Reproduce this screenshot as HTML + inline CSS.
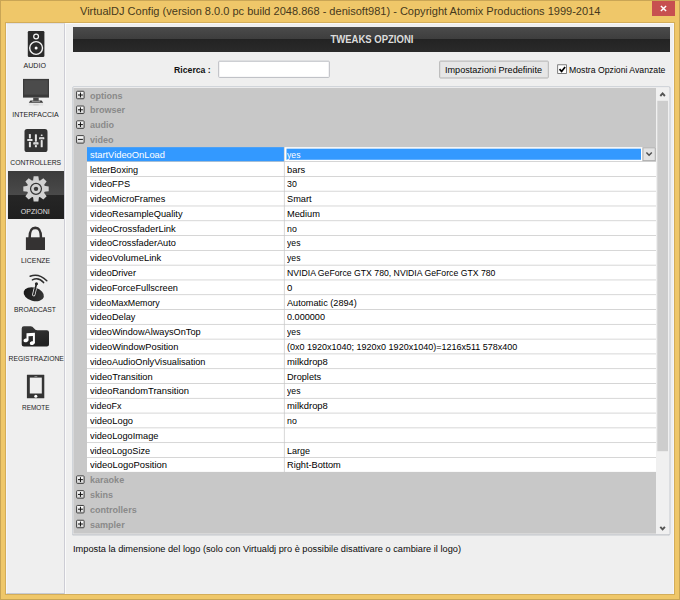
<!DOCTYPE html>
<html><head><meta charset="utf-8"><title>VirtualDJ Config</title>
<style>
html,body{margin:0;padding:0}
body{width:680px;height:600px;overflow:hidden;position:relative;background:#efc769;font-family:"Liberation Sans",sans-serif;}
.abs{position:absolute}
#win{position:absolute;left:0;top:0;width:678px;height:598px;border:1px solid #c9a555;}
#title{position:absolute;left:80px;top:2.5px;font-size:11.04px;line-height:16px;color:#46391c;white-space:pre}
#close{position:absolute;left:652px;top:1px;width:23px;height:14.5px;background:#c75050}
#client{position:absolute;left:6px;top:23px;width:668px;height:571px;background:#efefef;box-shadow:0 0 0 1px #d3ad59}
#side{position:absolute;left:6px;top:23px;width:59px;height:571px;border-top:1px solid #dfdfe6;border-left:1px solid #f6f6fa;border-right:1px solid #cdcdd5;border-bottom:1px solid #c6cad2;box-sizing:border-box;background:#efefef}
#side2{position:absolute;left:65px;top:23px;width:1px;height:571px;background:#fafafa}
#sel{position:absolute;left:8px;top:170.9px;width:55.5px;height:48.5px;background:linear-gradient(#3b3b3b 0%,#4a4a4a 49%,#262626 50%,#1f1f1f 100%)}
.lab{position:absolute;left:5.8px;width:59px;text-align:center;font-size:7.4px;line-height:9px;color:#333;white-space:pre}
.lab span{display:inline-block;transform-origin:50% 50%}
#hdr{position:absolute;left:73px;top:27px;width:597px;height:25.3px;background:linear-gradient(#4b4b4b 0%,#3e3e3e 47%,#232323 48%,#2a2a2a 100%)}
#hdrt{position:absolute;left:73px;top:27px;width:597px;text-align:center;font-weight:bold;font-size:10.3px;line-height:25px;color:#dcdcdc;white-space:pre}
#hdrt span{display:inline-block;transform:scaleX(0.924)}
.t{position:absolute;white-space:pre;transform-origin:0 50%}
#tree{position:absolute;left:74px;top:89px;width:590px;height:444px;background:#c8c8c8}
.row{position:absolute;left:0;height:14.793px;font-size:9.8px;line-height:14.2px;color:#000}
.nm{position:absolute;left:87px;width:196.5px;top:0;height:14.1px;background:#fff}
.vl{position:absolute;left:285px;width:371px;top:0;height:14.1px;background:#fff}
.dv{position:absolute;left:283.5px;width:1.5px;top:0;height:14.8px;background:#dadada}
.ln{position:absolute;left:87px;width:569px;top:14.1px;height:0.7px;background:#d4d4d4}
.tx{position:absolute;top:0;white-space:pre;transform-origin:0 50%;transform:scaleX(0.905)}
.cat{font-weight:bold;color:#8a8a8a;transform:scaleX(0.922)}
.box{position:absolute;left:76px;top:3px;width:7.5px;height:7.5px;border:1px solid #3a3a3a;background:#fff;box-sizing:content-box}
.box i{position:absolute;left:1.5px;top:3.25px;width:4.5px;height:1px;background:#000}
.box b{position:absolute;left:3.25px;top:1.5px;width:1px;height:4.5px;background:#000}
</style></head><body>
<div id="win"></div>
<div id="title">VirtualDJ Config (version 8.0.0 pc build 2048.868 - denisoft981) - Copyright Atomix Productions 1999-2014</div>
<div id="close"><svg width="23" height="15" viewBox="0 0 23 15" style="position:absolute;left:0;top:0"><path d="M8.9 5 L14.1 10 M14.1 5 L8.9 10" stroke="#fff" stroke-width="1.5" fill="none"/></svg></div>
<div id="client"></div>
<div class="abs" style="left:66px;top:23px;width:608px;height:1px;background:#f9f9f9"></div>
<div class="abs" style="left:673px;top:23px;width:1px;height:571px;background:#f6f6f9"></div>
<div id="side"></div><div id="side2"></div>
<div id="sel"></div>
<div class="lab" style="left:5.30px;top:60.74px;color:#222"><span style="transform:scaleX(0.956)">AUDIO</span></div>
<div class="lab" style="left:5.80px;top:109.58px;color:#222"><span style="transform:scaleX(0.952)">INTERFACCIA</span></div>
<div class="lab" style="left:5.75px;top:158.42px;color:#222"><span style="transform:scaleX(0.917)">CONTROLLERS</span></div>
<div class="lab" style="left:5.50px;top:207.26px;color:#e0e0e0"><span style="transform:scaleX(0.953)">OPZIONI</span></div>
<div class="lab" style="left:6.00px;top:256.10px;color:#222"><span style="transform:scaleX(0.934)">LICENZE</span></div>
<div class="lab" style="left:5.60px;top:304.94px;color:#222"><span style="transform:scaleX(0.908)">BROADCAST</span></div>
<div class="lab" style="left:6.15px;top:353.78px;color:#222"><span style="transform:scaleX(0.915)">REGISTRAZIONE</span></div>
<div class="lab" style="left:6.20px;top:402.62px;color:#222"><span style="transform:scaleX(0.872)">REMOTE</span></div>
<svg class="abs" style="left:0;top:0" width="70" height="600" viewBox="0 0 70 600">
<defs><linearGradient id="fg" x1="0" y1="0" x2="0.3" y2="1"><stop offset="0" stop-color="#383838"/><stop offset="1" stop-color="#222"/></linearGradient></defs>
<defs><linearGradient id="dg" x1="0" y1="0" x2="1" y2="0"><stop offset="0" stop-color="#181818"/><stop offset="1" stop-color="#363636"/></linearGradient></defs>
<!-- speaker -->
<rect x="27.8" y="31" width="16.6" height="26" rx="1.3" fill="#2b2b2b"/>
<circle cx="36.1" cy="36.6" r="2.4" fill="none" stroke="#f4f4f4" stroke-width="1.25"/>
<circle cx="36.1" cy="48" r="6.4" fill="none" stroke="#f4f4f4" stroke-width="1.4"/>
<circle cx="36.1" cy="48" r="1.5" fill="#fff"/>
<!-- monitor -->
<rect x="23" y="78.9" width="26" height="18.7" fill="#3a3a3a"/>
<rect x="24.2" y="80.2" width="23.6" height="14.4" fill="#4b4b4b"/>
<path d="M28.8 102.8 L30.4 100.4 L41.6 100.4 L43.2 102.8 Z" fill="#383838"/>
<rect x="33.2" y="97.6" width="5.5" height="3.5" fill="#484848"/>
<rect x="31.8" y="100.9" width="8.4" height="0.7" fill="#c4c4c4"/>
<rect x="28.9" y="103.2" width="14.2" height="2.3" fill="#dedede" opacity="0.75"/>
<rect x="33.4" y="104.4" width="5.2" height="0.9" fill="#c6c6c6"/>
<!-- controllers -->
<rect x="24.5" y="129.1" width="23" height="22.9" rx="2.6" fill="#333"/>
<g fill="#e4e4e4">
<rect x="28.9" y="133.9" width="2" height="4.5" rx="0.6"/><rect x="28.9" y="141.8" width="2" height="5.5" rx="0.6"/>
<rect x="34.9" y="134.2" width="2" height="7.5" rx="0.6"/><rect x="34.9" y="145.1" width="2" height="2.2" rx="0.6"/>
<rect x="40.7" y="134.4" width="2" height="1.7" rx="0.8"/><rect x="40.7" y="140.1" width="2" height="7.2" rx="0.6"/>
</g><g fill="#f2f2f2">
<rect x="27.3" y="139" width="5.2" height="2.1" rx="0.5"/><rect x="33.3" y="142.3" width="5.2" height="2.1" rx="0.5"/><rect x="39.1" y="137.2" width="5.2" height="2.1" rx="0.5"/>
</g><g fill="#9a9a9a">
<rect x="28.2" y="139.85" width="3.4" height="0.4"/><rect x="34.2" y="143.15" width="3.4" height="0.4"/><rect x="40" y="138.05" width="3.4" height="0.4"/>
</g>
<!-- gear -->
<g transform="translate(36 188.85)" fill="#d2d2d2">
<circle r="9.2"/>
<path d="M-3 -8 L-2.35 -12.7 L2.35 -12.7 L3 -8 Z" transform="rotate(0)"/><path d="M-3 -8 L-2.35 -12.7 L2.35 -12.7 L3 -8 Z" transform="rotate(45)"/><path d="M-3 -8 L-2.35 -12.7 L2.35 -12.7 L3 -8 Z" transform="rotate(90)"/><path d="M-3 -8 L-2.35 -12.7 L2.35 -12.7 L3 -8 Z" transform="rotate(135)"/><path d="M-3 -8 L-2.35 -12.7 L2.35 -12.7 L3 -8 Z" transform="rotate(180)"/><path d="M-3 -8 L-2.35 -12.7 L2.35 -12.7 L3 -8 Z" transform="rotate(225)"/><path d="M-3 -8 L-2.35 -12.7 L2.35 -12.7 L3 -8 Z" transform="rotate(270)"/><path d="M-3 -8 L-2.35 -12.7 L2.35 -12.7 L3 -8 Z" transform="rotate(315)"/>
<circle r="5.45" fill="none" stroke="#353535" stroke-width="1.2"/>
<circle r="2.2" fill="#3a3a3a"/>
</g>
<!-- lock -->
<rect x="25.9" y="237.3" width="19.1" height="12.7" fill="#343232"/>
<path d="M29.65 238 C29.65 230.2 31.3 227.9 35.3 227.9 C39.3 227.9 40.95 230.2 40.95 238" fill="none" stroke="#343232" stroke-width="2.6"/>
<!-- broadcast -->
<ellipse cx="33.8" cy="294.3" rx="10.4" ry="6.7" transform="rotate(15 33.8 294.3)" fill="url(#dg)"/>
<path d="M35.1 289.2 L33.75 294.7" stroke="#e6e6e6" stroke-width="3.3" stroke-linecap="round" fill="none"/>
<path d="M36.4 284 L33.8 294.6" stroke="#242424" stroke-width="1.7" stroke-linecap="round" fill="none"/>
<circle cx="36.45" cy="283.8" r="1.55" fill="#242424"/>
<path d="M30.1 276.3 Q38.5 272.6 46.8 280.8" fill="none" stroke="#2e2e2e" stroke-width="1.5" stroke-linecap="round"/>
<path d="M32.4 279.9 Q38.6 276.8 43.6 282.6" fill="none" stroke="#2e2e2e" stroke-width="1.5" stroke-linecap="round"/>
<!-- folder -->
<path d="M21.7 328.4 Q21.7 326.2 23.9 326.2 L30.6 326.2 Q32.6 326.2 33.9 328.2 Q35.2 330.2 37.2 330.2 L46.9 330.2 Q49 330.2 49 332.3 L49 344.5 Q49 346.6 46.9 346.6 L23.9 346.6 Q21.7 346.6 21.7 344.5 Z" fill="url(#fg)"/>
<g fill="#fff" stroke="none">
<ellipse cx="25.9" cy="340.4" rx="2.5" ry="1.85" transform="rotate(-15 25.9 340.4)"/><ellipse cx="32.2" cy="343.1" rx="2.5" ry="1.85" transform="rotate(-15 32.2 343.1)"/>
<path d="M26.5 340.6 L26.5 333.2 L34.9 332.8 L34.9 343.2 L32.9 343.2 L32.9 335.9 L28.5 336.2 L28.5 340.6 Z"/>
</g>
<!-- tablet -->
<rect x="26.9" y="374.7" width="17.4" height="23.6" rx="0.4" fill="#343434"/>
<rect x="29.8" y="377.6" width="12" height="15.9" fill="#efefef"/>
<circle cx="35.8" cy="396.2" r="1.55" fill="#fff"/>
<rect x="34.3" y="376.1" width="3.1" height="0.7" rx="0.3" fill="#9a9a9a"/>
</svg>
<div id="hdr"></div><div id="hdrt"><span>TWEAKS OPZIONI</span></div>
<div class="t" style="left:174.2px;top:63.2px;font-weight:bold;font-size:9.7px;line-height:13px;color:#111;transform:scaleX(0.898)">Ricerca :</div>
<svg class="abs" style="left:0;top:56px" width="680" height="26" viewBox="0 56 680 26">
<rect x="218.7" y="61.2" width="110.6" height="16.2" rx="0.8" fill="#fff" stroke="#b9bbc1" stroke-width="1"/>
<rect x="439.7" y="61.1" width="108.6" height="16.9" rx="0.8" fill="#e6e6e6" stroke="#b3b3b3" stroke-width="1"/>
<rect x="557.7" y="64.8" width="8.7" height="8.6" fill="#fff" stroke="#606060" stroke-width="0.8"/>
<path d="M559.5 69.1 L561.6 71.4 L565.1 66.9" fill="none" stroke="#000" stroke-width="1.7"/>
</svg>
<div class="t" style="left:445.4px;top:62.8px;font-size:9.9px;line-height:13px;color:#050505;transform:scaleX(0.92)">Impostazioni Predefinite</div>
<div class="t" style="left:569px;top:62.8px;font-size:9.9px;line-height:13px;color:#050505;transform:scaleX(0.88)">Mostra Opzioni Avanzate</div>
<div id="tree"></div>
<svg class="abs" style="left:0;top:0" width="680" height="600" viewBox="0 0 680 600">
<rect x="73.4" y="88" width="583" height="445.6" fill="#c8c8c8"/>
<defs><linearGradient id="bg" x1="0" y1="0" x2="0" y2="1"><stop offset="0" stop-color="#ffffff"/><stop offset="1" stop-color="#d6d6d6"/></linearGradient></defs>
<rect x="76.6" y="91.25" width="7.5" height="7.5" rx="0.8" fill="url(#bg)" stroke="#3e3e3e" stroke-width="1"/>
<rect x="78" y="94.50" width="4.9" height="1" fill="#111"/>
<rect x="79.95" y="92.55" width="1" height="4.9" fill="#111"/>
<rect x="76.6" y="106.04" width="7.5" height="7.5" rx="0.8" fill="url(#bg)" stroke="#3e3e3e" stroke-width="1"/>
<rect x="78" y="109.29" width="4.9" height="1" fill="#111"/>
<rect x="79.95" y="107.34" width="1" height="4.9" fill="#111"/>
<rect x="76.6" y="120.84" width="7.5" height="7.5" rx="0.8" fill="url(#bg)" stroke="#3e3e3e" stroke-width="1"/>
<rect x="78" y="124.09" width="4.9" height="1" fill="#111"/>
<rect x="79.95" y="122.14" width="1" height="4.9" fill="#111"/>
<rect x="76.6" y="135.63" width="7.5" height="7.5" rx="0.8" fill="url(#bg)" stroke="#3e3e3e" stroke-width="1"/>
<rect x="78" y="138.88" width="4.9" height="1" fill="#111"/>
<rect x="87" y="147.17" width="196.9" height="14.06" fill="#3399ff"/>
<rect x="284.64" y="147.17" width="371.4" height="14.06" fill="#fff"/>
<rect x="286.5" y="148.67" width="354.5" height="11.1" fill="#3399ff"/>
<rect x="642.9" y="147.77" width="12.4" height="12.9" fill="#e3e3e3" stroke="#a9a9a9" stroke-width="1"/>
<path d="M646.4 152.47 l2.7 2.7 l2.7 -2.7" fill="none" stroke="#505050" stroke-width="1.5"/>
<rect x="87" y="161.97" width="196.9" height="14.06" fill="#fff"/>
<rect x="284.64" y="161.97" width="371.4" height="14.06" fill="#fff"/>
<rect x="87" y="176.76" width="196.9" height="14.06" fill="#fff"/>
<rect x="284.64" y="176.76" width="371.4" height="14.06" fill="#fff"/>
<rect x="87" y="191.55" width="196.9" height="14.06" fill="#fff"/>
<rect x="284.64" y="191.55" width="371.4" height="14.06" fill="#fff"/>
<rect x="87" y="206.34" width="196.9" height="14.06" fill="#fff"/>
<rect x="284.64" y="206.34" width="371.4" height="14.06" fill="#fff"/>
<rect x="87" y="221.14" width="196.9" height="14.06" fill="#fff"/>
<rect x="284.64" y="221.14" width="371.4" height="14.06" fill="#fff"/>
<rect x="87" y="235.93" width="196.9" height="14.06" fill="#fff"/>
<rect x="284.64" y="235.93" width="371.4" height="14.06" fill="#fff"/>
<rect x="87" y="250.72" width="196.9" height="14.06" fill="#fff"/>
<rect x="284.64" y="250.72" width="371.4" height="14.06" fill="#fff"/>
<rect x="87" y="265.52" width="196.9" height="14.06" fill="#fff"/>
<rect x="284.64" y="265.52" width="371.4" height="14.06" fill="#fff"/>
<rect x="87" y="280.31" width="196.9" height="14.06" fill="#fff"/>
<rect x="284.64" y="280.31" width="371.4" height="14.06" fill="#fff"/>
<rect x="87" y="295.10" width="196.9" height="14.06" fill="#fff"/>
<rect x="284.64" y="295.10" width="371.4" height="14.06" fill="#fff"/>
<rect x="87" y="309.89" width="196.9" height="14.06" fill="#fff"/>
<rect x="284.64" y="309.89" width="371.4" height="14.06" fill="#fff"/>
<rect x="87" y="324.69" width="196.9" height="14.06" fill="#fff"/>
<rect x="284.64" y="324.69" width="371.4" height="14.06" fill="#fff"/>
<rect x="87" y="339.48" width="196.9" height="14.06" fill="#fff"/>
<rect x="284.64" y="339.48" width="371.4" height="14.06" fill="#fff"/>
<rect x="87" y="354.27" width="196.9" height="14.06" fill="#fff"/>
<rect x="284.64" y="354.27" width="371.4" height="14.06" fill="#fff"/>
<rect x="87" y="369.07" width="196.9" height="14.06" fill="#fff"/>
<rect x="284.64" y="369.07" width="371.4" height="14.06" fill="#fff"/>
<rect x="87" y="383.86" width="196.9" height="14.06" fill="#fff"/>
<rect x="284.64" y="383.86" width="371.4" height="14.06" fill="#fff"/>
<rect x="87" y="398.65" width="196.9" height="14.06" fill="#fff"/>
<rect x="284.64" y="398.65" width="371.4" height="14.06" fill="#fff"/>
<rect x="87" y="413.45" width="196.9" height="14.06" fill="#fff"/>
<rect x="284.64" y="413.45" width="371.4" height="14.06" fill="#fff"/>
<rect x="87" y="428.24" width="196.9" height="14.06" fill="#fff"/>
<rect x="284.64" y="428.24" width="371.4" height="14.06" fill="#fff"/>
<rect x="87" y="443.03" width="196.9" height="14.06" fill="#fff"/>
<rect x="284.64" y="443.03" width="371.4" height="14.06" fill="#fff"/>
<rect x="87" y="457.82" width="196.9" height="14.06" fill="#fff"/>
<rect x="284.64" y="457.82" width="371.4" height="14.06" fill="#fff"/>
<rect x="76.6" y="475.87" width="7.5" height="7.5" rx="0.8" fill="url(#bg)" stroke="#3e3e3e" stroke-width="1"/>
<rect x="78" y="479.12" width="4.9" height="1" fill="#111"/>
<rect x="79.95" y="477.17" width="1" height="4.9" fill="#111"/>
<rect x="76.6" y="490.66" width="7.5" height="7.5" rx="0.8" fill="url(#bg)" stroke="#3e3e3e" stroke-width="1"/>
<rect x="78" y="493.91" width="4.9" height="1" fill="#111"/>
<rect x="79.95" y="491.96" width="1" height="4.9" fill="#111"/>
<rect x="76.6" y="505.45" width="7.5" height="7.5" rx="0.8" fill="url(#bg)" stroke="#3e3e3e" stroke-width="1"/>
<rect x="78" y="508.70" width="4.9" height="1" fill="#111"/>
<rect x="79.95" y="506.75" width="1" height="4.9" fill="#111"/>
<rect x="76.6" y="520.25" width="7.5" height="7.5" rx="0.8" fill="url(#bg)" stroke="#3e3e3e" stroke-width="1"/>
<rect x="78" y="523.50" width="4.9" height="1" fill="#111"/>
<rect x="79.95" y="521.55" width="1" height="4.9" fill="#111"/>
<path d="M72.6 534.9 V88 Q72.6 86.6 74 86.6 H668.6" fill="none" stroke="#ced2d8" stroke-width="1"/>
<path d="M668.6 86.6 Q670 86.6 670 88 V533.6 Q670 534.9 668.7 534.9" fill="none" stroke="#c6cad0" stroke-width="1"/><path d="M669.4 534.9 H72.6" fill="none" stroke="#b8bcc3" stroke-width="1"/>
</svg>
<div class="row" style="top:88.70px"><span class="tx cat" style="left:89.6px">options</span></div>
<div class="row" style="top:102.70px"><span class="tx cat" style="left:89.6px">browser</span></div>
<div class="row" style="top:117.70px"><span class="tx cat" style="left:89.6px">audio</span></div>
<div class="row" style="top:132.70px"><span class="tx cat" style="left:89.6px">video</span></div>
<div class="row" style="top:147.70px"><span class="tx" style="left:89.6px;color:#fff;transform:scaleX(0.951)">startVideoOnLoad</span><span class="tx" style="left:287.2px;color:#fff;transform:scaleX(0.882)">yes</span></div>
<div class="row" style="top:162.70px"><span class="tx" style="left:89.6px;transform:scaleX(0.931)">letterBoxing</span><span class="tx" style="left:287.2px;transform:scaleX(0.953)">bars</span></div>
<div class="row" style="top:176.70px"><span class="tx" style="left:89.6px;transform:scaleX(0.944)">videoFPS</span><span class="tx" style="left:287.2px;transform:scaleX(0.896)">30</span></div>
<div class="row" style="top:191.70px"><span class="tx" style="left:89.6px;transform:scaleX(0.934)">videoMicroFrames</span><span class="tx" style="left:287.2px;transform:scaleX(0.939)">Smart</span></div>
<div class="row" style="top:206.70px"><span class="tx" style="left:89.6px;transform:scaleX(0.944)">videoResampleQuality</span><span class="tx" style="left:287.2px;transform:scaleX(0.946)">Medium</span></div>
<div class="row" style="top:221.70px"><span class="tx" style="left:89.6px;transform:scaleX(0.959)">videoCrossfaderLink</span><span class="tx" style="left:287.2px;transform:scaleX(0.896)">no</span></div>
<div class="row" style="top:235.70px"><span class="tx" style="left:89.6px;transform:scaleX(0.939)">videoCrossfaderAuto</span><span class="tx" style="left:287.2px;transform:scaleX(0.882)">yes</span></div>
<div class="row" style="top:250.70px"><span class="tx" style="left:89.6px;transform:scaleX(0.961)">videoVolumeLink</span><span class="tx" style="left:287.2px;transform:scaleX(0.882)">yes</span></div>
<div class="row" style="top:265.70px"><span class="tx" style="left:89.6px;transform:scaleX(0.927)">videoDriver</span><span class="tx" style="left:287.2px;transform:scaleX(0.886)">NVIDIA GeForce GTX 780, NVIDIA GeForce GTX 780</span></div>
<div class="row" style="top:280.70px"><span class="tx" style="left:89.6px;transform:scaleX(0.938)">videoForceFullscreen</span><span class="tx" style="left:287.2px;transform:scaleX(0.980)">0</span></div>
<div class="row" style="top:295.70px"><span class="tx" style="left:89.6px;transform:scaleX(0.902)">videoMaxMemory</span><span class="tx" style="left:287.2px;transform:scaleX(0.935)">Automatic (2894)</span></div>
<div class="row" style="top:309.70px"><span class="tx" style="left:89.6px;transform:scaleX(0.936)">videoDelay</span><span class="tx" style="left:287.2px;transform:scaleX(0.930)">0.000000</span></div>
<div class="row" style="top:324.70px"><span class="tx" style="left:89.6px;transform:scaleX(0.936)">videoWindowAlwaysOnTop</span><span class="tx" style="left:287.2px;transform:scaleX(0.882)">yes</span></div>
<div class="row" style="top:339.70px"><span class="tx" style="left:89.6px;transform:scaleX(0.949)">videoWindowPosition</span><span class="tx" style="left:287.2px;transform:scaleX(0.919)">(0x0 1920x1040; 1920x0 1920x1040)=1216x511 578x400</span></div>
<div class="row" style="top:354.70px"><span class="tx" style="left:89.6px;transform:scaleX(0.935)">videoAudioOnlyVisualisation</span><span class="tx" style="left:287.2px;transform:scaleX(0.962)">milkdrop8</span></div>
<div class="row" style="top:369.70px"><span class="tx" style="left:89.6px;transform:scaleX(0.949)">videoTransition</span><span class="tx" style="left:287.2px;transform:scaleX(0.935)">Droplets</span></div>
<div class="row" style="top:383.70px"><span class="tx" style="left:89.6px;transform:scaleX(0.960)">videoRandomTransition</span><span class="tx" style="left:287.2px;transform:scaleX(0.882)">yes</span></div>
<div class="row" style="top:398.70px"><span class="tx" style="left:89.6px;transform:scaleX(0.917)">videoFx</span><span class="tx" style="left:287.2px;transform:scaleX(0.962)">milkdrop8</span></div>
<div class="row" style="top:413.70px"><span class="tx" style="left:89.6px;transform:scaleX(0.952)">videoLogo</span><span class="tx" style="left:287.2px;transform:scaleX(0.896)">no</span></div>
<div class="row" style="top:428.70px"><span class="tx" style="left:89.6px;transform:scaleX(0.945)">videoLogoImage</span><span class="tx" style="left:287.2px;transform:scaleX(0.930)"></span></div>
<div class="row" style="top:443.70px"><span class="tx" style="left:89.6px;transform:scaleX(0.935)">videoLogoSize</span><span class="tx" style="left:287.2px;transform:scaleX(0.917)">Large</span></div>
<div class="row" style="top:457.70px"><span class="tx" style="left:89.6px;transform:scaleX(0.961)">videoLogoPosition</span><span class="tx" style="left:287.2px;transform:scaleX(0.941)">Right-Bottom</span></div>
<div class="row" style="top:472.70px"><span class="tx cat" style="left:89.6px">karaoke</span></div>
<div class="row" style="top:487.70px"><span class="tx cat" style="left:89.6px">skins</span></div>
<div class="row" style="top:502.70px"><span class="tx cat" style="left:89.6px">controllers</span></div>
<div class="row" style="top:517.70px"><span class="tx cat" style="left:89.6px">sampler</span></div>
<div class="abs" style="left:656px;top:88px;width:13px;height:446px;background:#f0f0f0"></div>
<svg class="abs" style="left:656px;top:88px" width="14" height="446" viewBox="0 0 14 446"><rect x="1.3" y="12.8" width="10.7" height="350.4" fill="#cdcdcd"/><path d="M4.3 8 L6.6 5.4 L8.9 8" fill="none" stroke="#555" stroke-width="1.9"/><path d="M4.3 438.8 L6.6 441.4 L8.9 438.8" fill="none" stroke="#555" stroke-width="1.9"/></svg>
<div class="t" style="left:72.6px;top:541.7px;font-size:9.7px;line-height:13px;color:#0a0a0a;transform:scaleX(0.9535)">Imposta la dimensione del logo (solo con Virtualdj pro è possibile disattivare o cambiare il logo)</div>
</body></html>
